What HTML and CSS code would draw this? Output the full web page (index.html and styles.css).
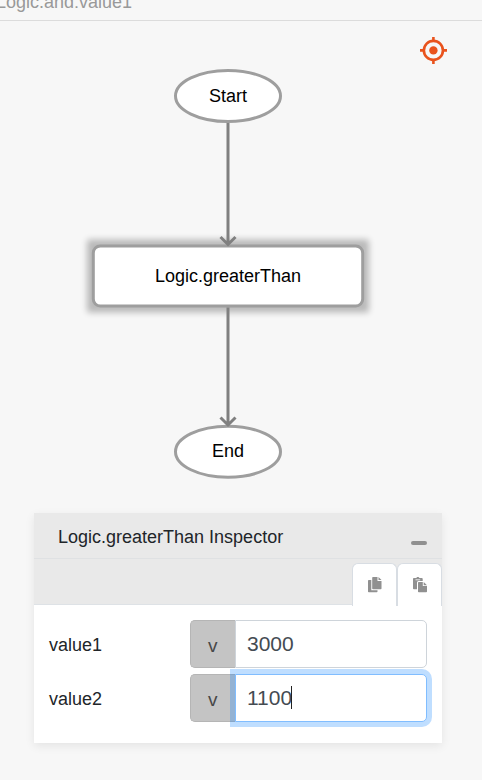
FILE: index.html
```html
<!DOCTYPE html>
<html lang="en">
<head>
<meta charset="utf-8">
<title>Logic.and:value1</title>
<link rel="stylesheet" href="styles.css">
</head>
<body>
<header class="breadcrumb"><span>Logic.and:value1</span></header>
<main class="workspace">
  <svg class="flow" width="482" height="492" viewBox="0 21 482 492">
    <defs>
      <filter id="glow" x="-10%" y="-30%" width="120%" height="160%"><feGaussianBlur stdDeviation="3"/></filter>
    </defs>
    <g class="target">
      <circle cx="433.4" cy="50.4" r="9.5"/>
      <path d="M433.4 37v5M433.4 59v5M420 50.4h5M442 50.4h5"/>
      <circle class="target-dot" cx="433.4" cy="50.4" r="4.2"/>
    </g>
    <rect class="glow" x="87" y="239.5" width="282" height="73" rx="2" filter="url(#glow)"/>
    <ellipse class="node" cx="228" cy="96" rx="52.5" ry="25.5"/>
    <rect class="node" x="93.3" y="246" width="269.400" height="60" rx="7"/>
    <ellipse class="node" cx="228" cy="451.7" rx="52.5" ry="25.5"/>
    <path class="edge" d="M228 123V244M220.5 237l7.5 7.5 7.5-7.5M228 307.5V425M220.5 417.5l7.5 7.5 7.5-7.5"/>
    <text class="label" x="228" y="102">Start</text>
    <text class="label" x="228" y="282" textLength="146">Logic.greaterThan</text>
    <text class="label" x="228" y="457">End</text>
  </svg>
  <section class="inspector">
    <div class="title-bar"><span>Logic.greaterThan Inspector</span><i class="minimize"></i></div>
    <nav class="tabs">
      <button class="tab" aria-label="Copy">
        <svg width="14" height="16" viewBox="0 0 14 16"><path d="M5 0h4.500v4H13.500v7.500a.8.8 0 0 1-.8.8H5a.8.8 0 0 1-.8-.8V.8A.8.8 0 0 1 5 0zM10.500 0l3 3h-3zM.8 3h2.5v10.2h6.2v1.3a.8.8 0 0 1-.8.8H.8a.8.8 0 0 1-.8-.8V3.800A.8.8 0 0 1 .8 3z"/></svg>
      </button>
      <button class="tab" aria-label="Paste">
        <svg width="14" height="16" viewBox="0 0 14 16"><path d="M.8 1.100h2.500a1.600 1.600 0 0 1 3.100 0h2.500a.8.8 0 0 1 .8.8V4H5.500A1.500 1.500 0 0 0 4 5.500v6.800H.8a.8.8 0 0 1-.8-.8V1.900a.8.8 0 0 1 .8-.8zM5.800 5h4v4H14v5.500a.8.8 0 0 1-.8.8H5.800a.8.8 0 0 1-.8-.8V5.800a.8.8 0 0 1 .8-.8zM10.700 5L14 8.200h-3.300z"/><path class="clip" d="M2.500 2.800h4.700"/></svg>
      </button>
    </nav>
    <div class="fields">
      <div class="row"><span class="name">value1</span><span class="kind">v</span><div class="value">3000</div></div>
      <div class="row"><span class="name">value2</span><span class="kind">v</span><div class="value focused">1100<i class="caret"></i></div></div>
    </div>
  </section>
</main>
</body>
</html>
```

FILE: styles.css
```css
* { box-sizing: border-box; }
body {
  margin: 0;
  height: 780px;
  overflow: hidden;
  background: #f7f7f7;
  font: 18px/27px "Liberation Sans", Arial, sans-serif;
  color: #212529;
}
.breadcrumb {
  height: 21px;
  display: flex;
  align-items: flex-end;
  padding-bottom: 4px;
  border-bottom: 1px solid #dcdcdc;
  color: #999;
  overflow: hidden;
}
.breadcrumb span { margin-left: -4px; }
.flow { display: block; }
.target { fill: none; stroke: #e9531d; stroke-width: 2.6; }
.target .target-dot { fill: #e9531d; stroke: none; }
.node { fill: #fff; stroke: #9e9e9e; stroke-width: 3; }
.glow { fill: #000; opacity: .25; }
.edge { fill: none; stroke: #808080; stroke-width: 3; }
.label { fill: #000; text-anchor: middle; }
.inspector {
  width: 408px;
  height: 230px;
  margin-left: 34px;
  background: #fff;
  box-shadow: 0 3px 9px rgba(0, 0, 0, .08);
}
.title-bar {
  height: 46px;
  display: flex;
  justify-content: space-between;
  padding: 11px 15px 0 24px;
  background: #e9e9e9;
  border-bottom: 1px solid #dfe1e3;
}
.minimize {
  width: 16px;
  height: 4px;
  margin-top: 17px;
  border-radius: 2px;
  background: #909090;
}
.tabs {
  height: 47px;
  display: flex;
  justify-content: flex-end;
  align-items: flex-end;
  background: linear-gradient(#e9e9e9 0 45px, #dee2e6 45px 46px, #fff 46px);
}
.tab {
  width: 45px;
  height: 43px;
  padding: 0;
  display: flex;
  align-items: center;
  justify-content: center;
  border: 1px solid #d8dde3;
  border-bottom: 0;
  border-radius: 6px 6px 0 0;
  background: #fff;
}
.tab svg { fill: #909090; }
.clip { fill: none; stroke: #fff; stroke-width: .8; }
.fields {
  display: flex;
  flex-direction: column;
  gap: 6px;
  padding: 14px 15px 0;
}
.row { display: flex; height: 48px; }
.name { width: 141px; padding-top: 12px; }
.kind {
  width: 44.5px;
  padding-top: 11px;
  text-align: center;
  font-size: 19px;
  color: #484848;
  background: #c4c4c4;
  border: 1px solid #b5b5b5;
  border-right: 0;
  border-radius: 5px 0 0 5px;
}
.value {
  flex: 1;
  display: flex;
  padding: 9px 11px 0 11.5px;
  font-size: 21px;
  color: #444b52;
  background: #fff;
  border: 1px solid #ced4da;
  border-radius: 0 5px 5px 0;
}
.focused { border-color: #80bdff; box-shadow: 0 0 0 5px rgba(0, 123, 255, .25); }
.caret { width: 1px; height: 23px; margin: 2px 0 0 -1px; background: #222; }
```
